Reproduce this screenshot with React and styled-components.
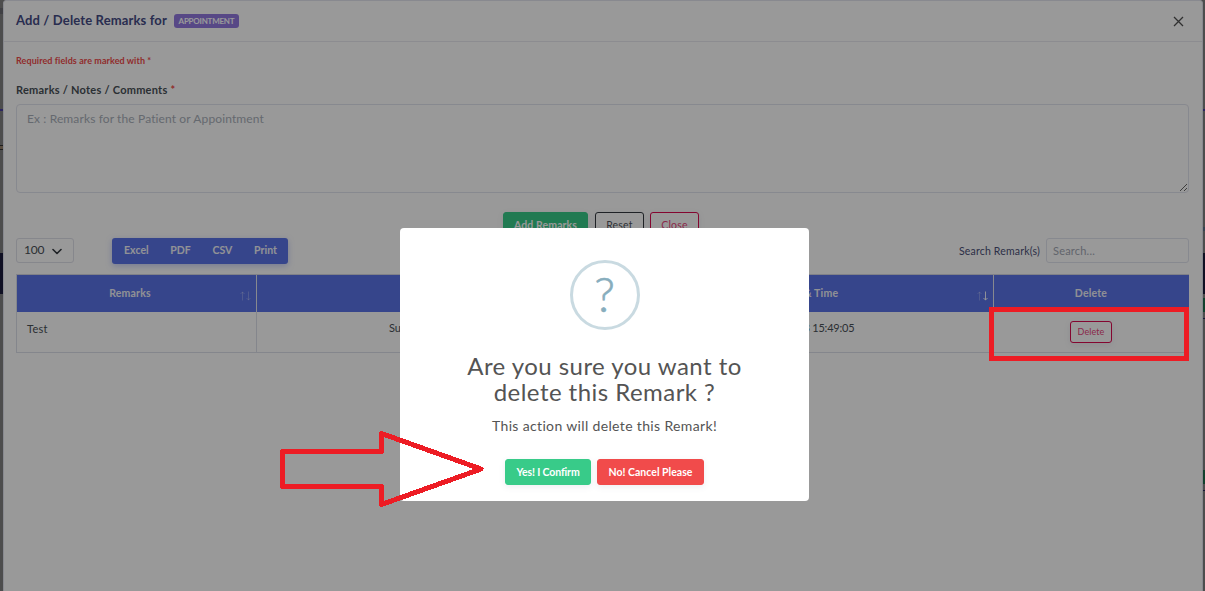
import React from "react";
import styled, { createGlobalStyle } from "styled-components";

const GlobalStyle = createGlobalStyle`
  *, *::before, *::after { box-sizing: border-box; }
  body { margin: 0; overflow: hidden; font-family: Lato, "Open Sans", sans-serif; color: #495057; }
  button, input, textarea { font-family: inherit; margin: 0; }
`;

const Page = styled.div`
  position: relative;
  display: flex;
  width: 1205px;
  height: 591px;
  overflow: hidden;
  background: #808080;
`;

const EdgeStrip = styled.div`
  display: flex;
  flex-direction: column;
  width: ${(p) => p.$width}px;
  flex: none;
`;

const EdgeBlock = styled.div`
  height: ${(p) => p.$h}px;
  flex: none;
  background: ${(p) => p.$color || "transparent"};
`;

const Panel = styled.section`
  display: flex;
  flex-direction: column;
  width: 1200px;
  height: 600px;
  background: #fff;
  border: 1px solid #e3e5ee;
  border-radius: 3px;
`;

const PanelHeader = styled.header`
  display: flex;
  align-items: center;
  height: 41px;
  padding: 0 18px 2px 12px;
  border-bottom: 1px solid #eaeaf0;
`;

const Title = styled.h5`
  margin: 0;
  font-size: 13px;
  font-weight: 700;
  letter-spacing: 0.14px;
  line-height: 18px;
  color: #454b85;
`;

const Badge = styled.span`
  margin: 1px auto 0 7px;
  width: 65px;
  height: 14px;
  border-radius: 3px;
  background: #9279e0;
  color: #fff;
  font-size: 8px;
  font-weight: 700;
  letter-spacing: -0.24px;
  line-height: 14px;
  text-align: center;
`;

const CloseIcon = styled.svg`
  width: 11px;
  height: 11px;
  margin-top: 3px;
  fill: none;
  stroke: #505050;
  stroke-width: 1.3;
`;

const PanelBody = styled.div`
  display: flex;
  flex-direction: column;
  padding: 12px 13px 0 12px;
`;

const Required = styled.p`
  margin: 0;
  font-size: 9px;
  font-weight: 700;
  letter-spacing: 0.08px;
  line-height: 14px;
  color: #f14b4b;
`;

const FieldLabel = styled.label`
  margin-top: 13px;
  font-size: 11px;
  font-weight: 700;
  letter-spacing: 0.24px;
  line-height: 18px;
  color: #495057;
`;

const Star = styled.span`
  color: #f14b4b;
`;

const RemarkBox = styled.textarea`
  display: block;
  width: 1173px;
  height: 89px;
  margin-top: 5px;
  padding: 5px 10px;
  border: 1px solid #e2e4ee;
  border-radius: 4px;
  background: #fff;
  font-size: 12px;
  letter-spacing: 0.12px;
  line-height: 17px;
  resize: vertical;
  outline: none;
  &::placeholder { color: #a9afba; }
`;

const FormActions = styled.div`
  display: flex;
  justify-content: center;
  gap: 6px;
  margin: 19px 3px 0 0;
`;

const tones = {
  success: { bg: "#38cb89", edge: "#38cb89", text: "#fff" },
  dark: { bg: "#fff", edge: "#343a40", text: "#50545c" },
  danger: { bg: "#fff", edge: "#dc0a50", text: "#e8457c" },
  solidDanger: { bg: "#f14b4b", edge: "#f14b4b", text: "#fff" },
};

const Button = styled.button`
  width: ${(p) => p.$width}px;
  height: ${(p) => (p.$small ? 22 : 26)}px;
  padding: 0;
  border: 1px solid ${(p) => tones[p.$tone].edge};
  border-radius: 3px;
  background: ${(p) => tones[p.$tone].bg};
  color: ${(p) => tones[p.$tone].text};
  font-size: ${(p) => (p.$small ? 9 : 10.5)}px;
  font-weight: ${(p) => (p.$bold ? 700 : 400)};
  letter-spacing: ${(p) => p.$track || 0.1}px;
  line-height: ${(p) => (p.$small ? 20 : 24)}px;
  box-shadow: 0 2px 6px rgba(80, 90, 130, 0.1);
`;

const SubmitButton = styled(Button)`
  margin-right: 1px;
`;

const Toolbar = styled.div`
  display: flex;
  align-items: flex-start;
  height: 36px;
`;

const LengthSelect = styled.div`
  display: flex;
  align-items: center;
  justify-content: space-between;
  width: 58px;
  height: 25px;
  padding: 0 11px 3px 7px;
  border: 1px solid #dfe1ea;
  border-radius: 3px;
  font-size: 12px;
  letter-spacing: -0.2px;
`;

const Chevron = styled.svg`
  width: 10px;
  height: 7px;
  margin-top: 5px;
  fill: none;
  stroke: #343a40;
  stroke-width: 1.6;
  stroke-linecap: round;
  stroke-linejoin: round;
`;

const ExportGroup = styled.div`
  display: flex;
  justify-content: space-between;
  width: 176px;
  height: 26px;
  margin-left: 38px;
  padding: 0 11px 0 12px;
  border-radius: 3px;
  background: #5b73e8;
  box-shadow: 0 2px 6px rgba(91, 115, 232, 0.35);
`;

const ExportItem = styled.span`
  color: #f2f3fa;
  font-size: 10.5px;
  font-weight: 700;
  letter-spacing: 0.05px;
  line-height: 25px;
`;

const SearchLabel = styled.label`
  display: flex;
  align-items: center;
  gap: 6px;
  margin-left: auto;
  font-size: 10.5px;
  letter-spacing: 0.18px;
  color: #4b5077;
`;

const SearchInput = styled.input`
  width: 143px;
  height: 25px;
  padding: 0 6px 1px;
  border: 1px solid #e2e4ee;
  border-radius: 3px;
  background: #fff;
  font-size: 11px;
  letter-spacing: 0.2px;
  &::placeholder { color: #a3a8b4; }
`;

const Table = styled.div`
  display: grid;
  grid-template-columns: 240px 379px 358px 195px;
  grid-template-rows: 37px 41px;
  border-top: 1px solid #d5d7e3;
  border-left: 1px solid #dddfea;
  width: 1173px;
`;

const HeadCell = styled.div`
  display: flex;
  align-items: center;
  border-right: 1px solid #e2e4ee;
  background: #5b73e8;
  color: #f0f1f8;
  font-size: 10.5px;
  font-weight: 700;
  letter-spacing: 0.2px;
  &:nth-child(4) { border-right-color: #5b73e8; }
`;

const HeadText = styled.span`
  flex: 1;
  text-align: center;
  padding-bottom: ${(p) => (p.$raise ? 2 : 1)}px;
`;

const SortIcon = styled.svg`
  width: 11px;
  height: 10px;
  margin: 5px 5px 0 -3px;
  flex: none;
  fill: none;
  stroke: #fff;
  stroke-width: 1;
`;

const BodyCell = styled.div`
  display: flex;
  justify-content: ${(p) => (p.$center ? "center" : "flex-start")};
  align-items: flex-start;
  padding: ${(p) => p.$pad || "9px 10px"};
  border-right: 1px solid #dddfea;
  border-bottom: 1px solid #dddfea;
  font-size: 11px;
  line-height: 16px;
  letter-spacing: ${(p) => p.$track || 0}px;
`;

const Overlay = styled.div`
  position: absolute;
  inset: 0;
  display: flex;
  align-items: flex-start;
  justify-content: center;
  padding: 228px 0 0 4px;
  background: rgba(0, 0, 0, 0.4);
`;

const Dialog = styled.div`
  display: flex;
  flex-direction: column;
  align-items: center;
  width: 409px;
  height: 273px;
  padding-top: 32px;
  border-radius: 4px;
  background: #fff;
`;

const QuestionRing = styled.div`
  width: 70px;
  height: 70px;
  border: 3px solid #c9dae1;
  border-radius: 50%;
  color: #87adbd;
  font-size: 48px;
  font-weight: 300;
  line-height: 62px;
  text-align: center;
  -webkit-text-stroke: 0.6px #87adbd;
`;

const Question = styled.h2`
  margin: 23px 0 0;
  font-size: 24px;
  font-weight: 400;
  letter-spacing: 0.46px;
  line-height: 26px;
  text-align: center;
  color: #545454;
`;

const Detail = styled.p`
  margin: 11px 0 0;
  font-size: 14px;
  letter-spacing: 0.35px;
  line-height: 20px;
  color: #545454;
`;

const DialogActions = styled.div`
  display: flex;
  gap: 6px;
  margin-top: 23px;
`;

const RowHighlight = styled.div`
  position: absolute;
  left: 989px;
  top: 307px;
  width: 200px;
  height: 54px;
  border: 5px solid #ed1c24;
`;

const PointerArrow = styled.svg`
  position: absolute;
  left: 270px;
  top: 420px;
  fill: none;
  stroke: #ed1c24;
  stroke-width: 5;
  stroke-linejoin: round;
  shape-rendering: crispEdges;
`;

const Sort = ({ desc }) => (
  <SortIcon viewBox="0 0 11 10">
    <path d="M2.5 9.5V.8M.5 3l2-2 2 2" opacity="0.25" />
    <path d="M8.5 .5v8.7M6.5 7l2 2 2-2" opacity={desc ? 0.9 : 0.25} />
  </SortIcon>
);

const leftEdge = [[8], [6, "#6b6b72"], [95], [2, "#4a3fa0"], [34], [1, "#333"], [3, "#94806c"], [1, "#333"], [103], [41, "#1b1b3b"]];
const rightEdge = [[109], [2, "#4a3fa0"], [116], [4, "#5d7088"], [22], [41, "#1b1b3b"], [4], [14, "#1e6d4b"], [6], [1, "#27275c"], [151], [14, "#1e6d4b"], [6], [1, "#27275c"]];

const Edge = ({ width, blocks }) => (
  <EdgeStrip $width={width}>
    {blocks.map(([h, color], i) => (
      <EdgeBlock key={i} $h={h} $color={color} />
    ))}
  </EdgeStrip>
);

export default function App() {
  return (
    <Page>
      <GlobalStyle />
      <Edge width={3} blocks={leftEdge} />
      <Panel>
        <PanelHeader>
          <Title>Add / Delete Remarks for</Title>
          <Badge>APPOINTMENT</Badge>
          <CloseIcon viewBox="0 0 11 11">
            <path d="M1 1l9 9M10 1l-9 9" />
          </CloseIcon>
        </PanelHeader>
        <PanelBody>
          <Required>Required fields are marked with *</Required>
          <FieldLabel>
            Remarks / Notes / Comments <Star>*</Star>
          </FieldLabel>
          <RemarkBox placeholder="Ex : Remarks for the Patient or Appointment" />
          <FormActions>
            <SubmitButton $tone="success" $width={85} $bold>Add Remarks</SubmitButton>
            <Button $tone="dark" $width={49} $track={0.2}>Reset</Button>
            <Button $tone="danger" $width={49} $track={0.2}>Close</Button>
          </FormActions>
          <Toolbar>
            <LengthSelect>
              100
              <Chevron viewBox="0 0 10 7">
                <path d="M1 1.5l4 4 4-4" />
              </Chevron>
            </LengthSelect>
            <ExportGroup>
              {["Excel", "PDF", "CSV", "Print"].map((label) => (
                <ExportItem key={label}>{label}</ExportItem>
              ))}
            </ExportGroup>
            <SearchLabel>
              Search Remark(s)
              <SearchInput placeholder="Search..." />
            </SearchLabel>
          </Toolbar>
          <Table>
            <HeadCell>
              <HeadText $raise>Remarks</HeadText>
              <Sort />
            </HeadCell>
            <HeadCell>
              <HeadText>Added By</HeadText>
              <Sort />
            </HeadCell>
            <HeadCell>
              <HeadText>Date &amp; Time</HeadText>
              <Sort desc />
            </HeadCell>
            <HeadCell>
              <HeadText>Delete</HeadText>
            </HeadCell>
            <BodyCell $track={0.3}>Test</BodyCell>
            <BodyCell $pad="8px 0 0 132px">Super Admin</BodyCell>
            <BodyCell $center $pad="8px 22px 0 0" $track={-0.22}>03-08-2023 15:49:05</BodyCell>
            <BodyCell $center $pad="9px 0 0 0">
              <Button $tone="danger" $width={42} $small>Delete</Button>
            </BodyCell>
          </Table>
        </PanelBody>
      </Panel>
      <Edge width={2} blocks={rightEdge} />
      <Overlay>
        <Dialog>
          <QuestionRing>?</QuestionRing>
          <Question>
            Are you sure you want to
            <br />
            delete this Remark ?
          </Question>
          <Detail>This action will delete this Remark!</Detail>
          <DialogActions>
            <Button $tone="success" $width={86} $bold $track={-0.12}>Yes! I Confirm</Button>
            <Button $tone="solidDanger" $width={107} $bold $track={0.01}>No! Cancel Please</Button>
          </DialogActions>
        </Dialog>
      </Overlay>
      <RowHighlight />
      <PointerArrow width="216" height="92" viewBox="0 0 216 92">
        <path d="M12.5 31.5H111.5V13.5L211 49L111.5 84.5V66.5H12.5Z" />
      </PointerArrow>
    </Page>
  );
}
